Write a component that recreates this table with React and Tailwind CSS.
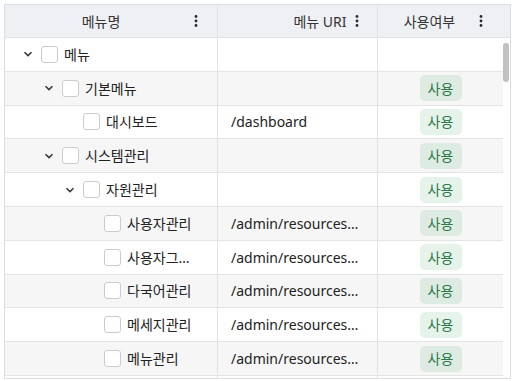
const rows = [
  { name: "메뉴", level: 0, open: true, uri: "", use: false },
  { name: "기본메뉴", level: 1, open: true, uri: "", use: true },
  { name: "대시보드", level: 2, uri: "/dashboard", use: true },
  { name: "시스템관리", level: 1, open: true, uri: "", use: true },
  { name: "자원관리", level: 2, open: true, uri: "", use: true },
  { name: "사용자관리", level: 3, uri: "/admin/resources/users", use: true },
  { name: "사용자그룹관리", level: 3, uri: "/admin/resources/groups", use: true },
  { name: "다국어관리", level: 3, uri: "/admin/resources/i18n", use: true },
  { name: "메세지관리", level: 3, uri: "/admin/resources/messages", use: true },
  { name: "메뉴관리", level: 3, uri: "/admin/resources/menus", use: true },
  { name: "코드관리", level: 3, uri: "/admin/resources/codes", use: true },
];

const Dots = () => (
  <svg width="4" height="14" viewBox="0 0 4 14" className="text-[#2b2b2b]">
    <circle cx="2" cy="2.5" r="1.4" fill="currentColor" />
    <circle cx="2" cy="7" r="1.4" fill="currentColor" />
    <circle cx="2" cy="11.5" r="1.4" fill="currentColor" />
  </svg>
);

const Chevron = () => (
  <svg width="10" height="6" viewBox="0 0 10 6" fill="none">
    <path d="M1.5 1.2 L5 4.6 L8.5 1.2" stroke="#3a3a3a" strokeWidth="1.6" />
  </svg>
);

const Checkbox = () => (
  <span className="w-[17px] h-[17px] shrink-0 rounded-[3px] border border-[#c9cdd2] bg-white" />
);

const App = () => {
  return (
    <div
      className="m-[4px] w-[507px] h-[375px] border border-[#d9dee4] bg-white flex flex-col overflow-hidden text-[14px] text-[#222]"
      style={{ fontFamily: '"Noto Sans", "Noto Sans CJK KR", sans-serif' }}
    >
      {/* header */}
      <div className="flex h-[33px] shrink-0 bg-[#eef0f3] border-b border-[#dfe2e6] text-[#333]">
        <div className="w-[213px] flex items-center border-r border-[#dfe2e6] pl-[11px] pr-[11px]">
          <span className="flex-1 text-center">메뉴명</span>
          <span className="w-[20px] flex justify-center">
            <Dots />
          </span>
        </div>
        <div className="w-[160px] flex items-center border-r border-[#dfe2e6] pl-[75px] pr-[10px]">
          <span className="flex-1 text-center whitespace-nowrap">메뉴 URI</span>
          <span className="w-[20px] flex justify-center">
            <Dots />
          </span>
        </div>
        <div className="flex-1 flex items-center pl-[10px] pr-[19px]">
          <span className="flex-1 text-center">사용여부</span>
          <span className="w-[20px] flex justify-center">
            <Dots />
          </span>
        </div>
      </div>

      {/* body */}
      <div className="flex flex-1 min-h-0">
        <div className="w-[498px] overflow-hidden">
          {rows.map((row, i) => (
            <div
              key={i}
              className={`flex h-[33.8px] border-b border-[#e4e4e4] ${
                i % 2 === 1 ? "bg-[#f6f6f6]" : "bg-white"
              }`}
            >
              <div
                className="w-[213px] flex items-center border-r border-[#e2e2e2] pr-[20px] min-w-0"
                style={{ paddingLeft: 13 + row.level * 21 }}
              >
                <span className="w-[20px] shrink-0 flex justify-center">
                  {row.open && <Chevron />}
                </span>
                <span className="ml-[3px] flex">
                  <Checkbox />
                </span>
                <span className="ml-[6px] truncate">{row.name}</span>
              </div>
              <div className="w-[160px] flex items-center border-r border-[#e2e2e2] pl-[13px] pr-[16px] min-w-0">
                <span className="truncate">{row.uri}</span>
              </div>
              <div className="flex-1 flex items-center justify-center">
                {row.use && (
                  <span className="w-[42px] h-[26px] rounded-[5px] bg-[rgba(46,160,80,0.12)] text-[#2b7a4b] flex items-center justify-center">
                    사용
                  </span>
                )}
              </div>
            </div>
          ))}
        </div>
        <div className="w-[7px] bg-white pt-[5px]">
          <div className="h-[39px] w-[6px] rounded-full bg-[#c1c1c1]" />
        </div>
      </div>
    </div>
  );
};

export default App;
